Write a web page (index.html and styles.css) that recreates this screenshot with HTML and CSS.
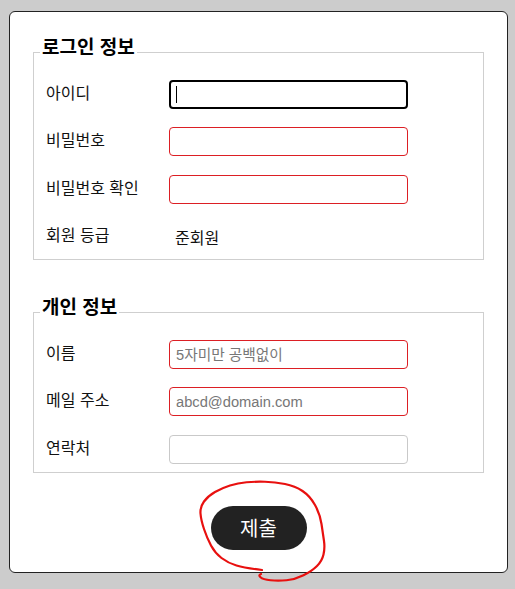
FILE: index.html
```html
<!DOCTYPE html>
<html lang="ko">
<head>
<meta charset="utf-8">
<title>회원가입</title>
<link rel="stylesheet" href="styles.css">
</head>
<body>
<form class="card">
  <fieldset class="group">
    <legend class="group-title">로그인 정보</legend>
    <div class="row">
      <label class="row-label">아이디</label>
      <span class="focus-wrap"><input class="field field-focus" type="text"></span>
    </div>
    <div class="row">
      <label class="row-label">비밀번호</label>
      <input class="field field-error" type="password">
    </div>
    <div class="row">
      <label class="row-label">비밀번호 확인</label>
      <input class="field field-error" type="password">
    </div>
    <div class="row">
      <span class="row-label">회원 등급</span>
      <span class="row-value">준회원</span>
    </div>
  </fieldset>

  <fieldset class="group group-second">
    <legend class="group-title">개인 정보</legend>
    <div class="row">
      <label class="row-label">이름</label>
      <input class="field field-error" type="text" placeholder="5자미만 공백없이">
    </div>
    <div class="row">
      <label class="row-label">메일 주소</label>
      <input class="field field-error" type="text" placeholder="abcd@domain.com">
    </div>
    <div class="row">
      <label class="row-label">연락처</label>
      <input class="field" type="text">
    </div>
  </fieldset>

  <button class="submit" type="button">제출</button>
</form>

<svg class="scribble" width="515" height="589" viewBox="0 0 515 589" aria-hidden="true">
  <path d="M262,570 Q245,568 236.5,565.5 Q228,563 221.5,558 Q215,553 211,545.5 Q207,538 204,529 Q201,520 200.5,513.5 Q200,507 204,501.5 Q208,496 215,492 Q222,488 230,485.5 Q238,483 246.5,482.25 Q255,481.5 265,481.75 Q275,482 285,484 Q295,486 302.5,491 Q310,496 315,505 Q320,514 321.5,524 Q323,534 324,541 Q325,548 323.5,554.5 Q322,561 317,566 Q312,571 303.5,575.25 Q295,579.5 286.5,580.25 Q278,581 270.5,580.25 Q263,579.5 260.5,577.25 Q258,575 261,574" fill="none" stroke="#e8100f" stroke-width="2.2" stroke-linecap="round" stroke-linejoin="round"/>
</svg>
</body>
</html>
```

FILE: styles.css
```css
html, body {
  margin: 0;
  padding: 0;
}

body {
  background: #cccccc;
  padding: 11px 8px 0 9px;
  font-family: "Noto Sans CJK KR", "Liberation Sans", sans-serif;
  color: #111;
  position: relative;
  min-height: 578px;
}

.card {
  box-sizing: border-box;
  width: 499px;
  background: #fff;
  border: 1px solid #222;
  border-radius: 6px;
  padding: 23px 23px 22px;
}

.group {
  margin: 0;
  min-inline-size: 0;
  border: 1px solid #cfcfcf;
  padding: 10px 12px 8px;
}

.group-second {
  margin-top: 35px;
}

.group-title {
  font-size: 19px;
  font-weight: 700;
  line-height: 22px;
  padding: 0 2px 13px;
  margin-left: -6px;
  color: #000;
}

.row {
  display: grid;
  grid-template-columns: 123px 239px;
  align-items: center;
  height: 29px;
  margin-top: 18px;
}

.row:first-of-type {
  margin-top: 0;
}

.row:nth-of-type(3) {
  margin-top: 19px;
}

.row-label {
  font-size: 16px;
  line-height: 20px;
  margin-bottom: 5px;
  white-space: nowrap;
}

.row-value {
  font-size: 16px;
  line-height: 20px;
  padding-left: 6px;
}

.field {
  box-sizing: border-box;
  width: 239px;
  height: 29px;
  margin: 0;
  padding: 0 6px;
  border: 1px solid #c9c9c9;
  border-radius: 4px;
  background: #fff;
  font-family: "Liberation Sans", "Noto Sans CJK KR", sans-serif;
  font-size: 14.7px;
  color: #111;
  outline: none;
}

.field::placeholder {
  color: #777;
}

.field-error {
  border-color: #dc1f24;
}

.focus-wrap {
  position: relative;
  display: block;
  width: 239px;
  height: 29px;
}

.field-focus {
  border: 2px solid #000;
  border-radius: 4px;
}

.focus-wrap::after {
  content: "";
  position: absolute;
  left: 7px;
  top: 6px;
  width: 1px;
  height: 17px;
  background: #000;
}

.submit {
  display: block;
  box-sizing: border-box;
  width: 96px;
  height: 44px;
  margin: 33px auto 0;
  padding: 0;
  border: none;
  border-radius: 22px;
  background: #222;
  color: #fff;
  font-family: "Noto Sans CJK KR", sans-serif;
  font-size: 20px;
  line-height: 44px;
}

.scribble {
  position: absolute;
  left: 0;
  top: 0;
  pointer-events: none;
}
```
